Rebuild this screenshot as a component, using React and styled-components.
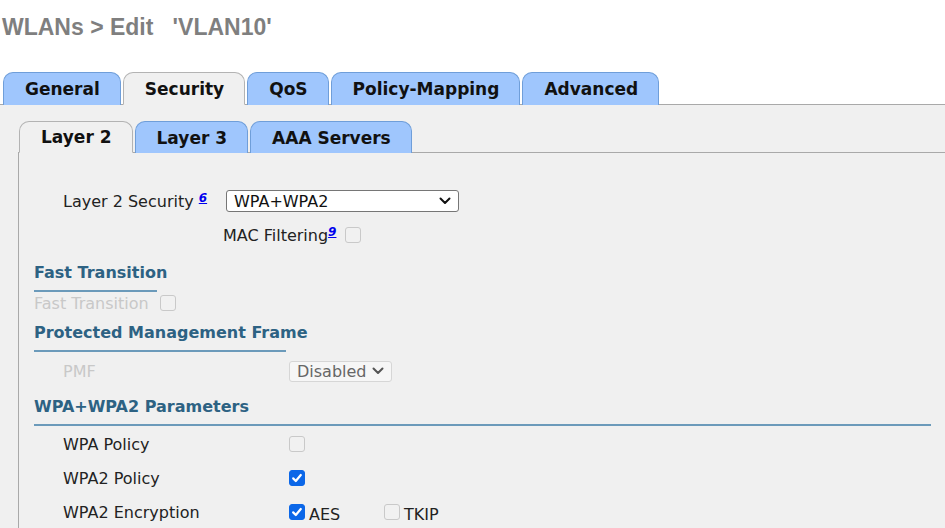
import React from "react";
import styled, { createGlobalStyle } from "styled-components";

const GlobalStyle = createGlobalStyle`
  html, body {
    margin: 0;
    padding: 0;
    background: #ffffff;
  }
  body {
    width: 945px;
    height: 528px;
    overflow: hidden;
    font-family: "DejaVu Sans", Verdana, sans-serif;
    color: #222222;
  }
`;

function Chevron({ color = "#111" }) {
  return (
    <svg width="12" height="8" viewBox="0 0 12 8">
      <path d="M1.5 1.5 L6 6 L10.5 1.5" fill="none" stroke={color} strokeWidth="2" strokeLinecap="round" strokeLinejoin="round" />
    </svg>
  );
}

function Check({ checked }) {
  return (
    <CheckBox checked={checked}>
      {checked && (
        <svg width="12" height="12" viewBox="0 0 12 12">
          <path d="M2.2 6.4 L4.8 9 L9.8 3" fill="none" stroke="#fff" strokeWidth="2.2" strokeLinecap="round" strokeLinejoin="round" />
        </svg>
      )}
    </CheckBox>
  );
}

const outerTabs = ["General", "Security", "QoS", "Policy-Mapping", "Advanced"];
const innerTabs = ["Layer 2", "Layer 3", "AAA Servers"];

export default function App() {
  return (
    <Page>
      <GlobalStyle />
      <Title>WLANs &gt; Edit&nbsp;&nbsp;&nbsp;'VLAN10'</Title>

      <TabBar indent={3}>
        {outerTabs.map((t) => (
          <Tab key={t} active={t === "Security"} h={33}>
            {t}
          </Tab>
        ))}
      </TabBar>

      <OuterPanel>
        <TabBar indent={1}>
          {innerTabs.map((t) => (
            <Tab key={t} active={t === "Layer 2"} h={32}>
              {t}
            </Tab>
          ))}
        </TabBar>

        <InnerPanel>
          <Row mt={37} indent={29}>
            <Label w={163}>
              Layer 2 Security <Sup href="#">6</Sup>
            </Label>
            <Select w={233} h={22}>
              <span>WPA+WPA2</span>
              <Chevron />
            </Select>
          </Row>

          <Row mt={13} h={20} indent={189}>
            <Label>
              MAC Filtering<Sup href="#">9</Sup>
            </Label>
            <Gap w={9} />
            <Check />
          </Row>

          <Heading mt={19} w={123}>Fast Transition</Heading>
          <Row mt={1} h={20}>
            <Label disabled>Fast Transition</Label>
            <Gap w={11} />
            <Check />
          </Row>

          <Heading mt={11} w={252}>Protected Management Frame</Heading>
          <Row mt={8} indent={29}>
            <Label w={226} disabled>PMF</Label>
            <Select w={103} h={21} disabled>
              <span>Disabled</span>
              <Chevron color="#555" />
            </Select>
          </Row>

          <Heading mt={16}>WPA+WPA2 Parameters</Heading>
          <Row mt={7} indent={29}>
            <Label w={226}>WPA Policy</Label>
            <Check />
          </Row>
          <Row mt={12} indent={29}>
            <Label w={226}>WPA2 Policy</Label>
            <Check checked />
          </Row>
          <Row mt={12} indent={29}>
            <Label w={226}>WPA2 Encryption</Label>
            <Option w={95}>
              <Check checked />
              <OptionText>AES</OptionText>
            </Option>
            <Option>
              <Check />
              <OptionText>TKIP</OptionText>
            </Option>
          </Row>
        </InnerPanel>
      </OuterPanel>
    </Page>
  );
}

const Page = styled.div`
  display: flex;
  flex-direction: column;
  height: 528px;
`;

const Title = styled.h1`
  margin: 0;
  padding: 14px 0 0 2px;
  height: 27px;
  line-height: 27px;
  font-family: "Liberation Sans", Arial, sans-serif;
  font-size: 23px;
  font-weight: bold;
  color: #7f7f7f;
  margin-bottom: 31px;
  white-space: nowrap;
`;

const TabBar = styled.div`
  display: flex;
  align-items: flex-end;
  gap: 2px;
  padding-left: ${(p) => p.indent || 0}px;
`;

const Tab = styled.div`
  position: relative;
  z-index: ${(p) => (p.active ? 2 : 1)};
  box-sizing: border-box;
  height: ${(p) => p.h}px;
  margin-bottom: -1px;
  padding: 0 20px 0 21px;
  display: flex;
  align-items: center;
  justify-content: center;
  font-size: 17px;
  font-weight: bold;
  color: #111111;
  white-space: nowrap;
  border: 1px solid ${(p) => (p.active ? "#b3b3b3" : "#6f9ed9")};
  border-bottom: ${(p) => (p.active ? "1px solid #f0f0f0" : "none")};
  border-radius: 10px 10px 0 0;
  background: ${(p) => (p.active ? "#f0f0f0" : "#9fc6fd")};
`;

const OuterPanel = styled.div`
  flex: 1;
  background: #f0f0f0;
  border-top: 1px solid #a9a9a9;
  padding: 16px 0 0 18px;
  display: flex;
  flex-direction: column;
`;

const InnerPanel = styled.div`
  flex: 1;
  border-top: 1px solid #a9a9a9;
  border-left: 1px solid #a9a9a9;
  padding: 0 14px 0 15px;
  display: flex;
  flex-direction: column;
`;

const Row = styled.div`
  display: flex;
  align-items: center;
  flex: none;
  height: ${(p) => p.h || 22}px;
  margin-top: ${(p) => p.mt || 0}px;
  padding-left: ${(p) => p.indent || 0}px;
`;

const Label = styled.span`
  flex: none;
  width: ${(p) => (p.w ? `${p.w}px` : "auto")};
  font-size: 16px;
  white-space: nowrap;
  color: ${(p) => (p.disabled ? "#c8c8c8" : "#222222")};
`;

const Sup = styled.a`
  font-size: 12px;
  font-weight: bold;
  font-style: italic;
  color: #0000ee;
  text-decoration: underline;
  vertical-align: 5px;
  line-height: 0;
`;

const Gap = styled.span`
  flex: none;
  width: ${(p) => p.w}px;
`;

const Select = styled.div`
  box-sizing: border-box;
  flex: none;
  width: ${(p) => p.w}px;
  height: ${(p) => p.h}px;
  display: flex;
  align-items: center;
  justify-content: space-between;
  padding: 0 7px 0 7px;
  font-size: 16px;
  background: ${(p) => (p.disabled ? "#f6f6f6" : "#ffffff")};
  color: ${(p) => (p.disabled ? "#666666" : "#111111")};
  border: 1px solid ${(p) => (p.disabled ? "#d6d6d6" : "#767676")};
  border-radius: 3px;
`;

const Heading = styled.div`
  flex: none;
  align-self: ${(p) => (p.w ? "flex-start" : "stretch")};
  width: ${(p) => (p.w ? `${p.w}px` : "auto")};
  margin-top: ${(p) => p.mt || 0}px;
  padding-bottom: 8px;
  border-bottom: 2px solid #6b9aba;
  line-height: 18px;
  font-size: 16px;
  font-weight: bold;
  color: #2d6283;
  white-space: nowrap;
`;

const CheckBox = styled.span`
  box-sizing: border-box;
  flex: none;
  width: 16px;
  height: 16px;
  display: inline-flex;
  align-items: center;
  justify-content: center;
  border-radius: 3px;
  border: 1px solid ${(p) => (p.checked ? "#0b67e8" : "#c9c9c9")};
  background: ${(p) => (p.checked ? "#0b67e8" : "#f1f1f1")};
`;

const Option = styled.span`
  flex: none;
  display: flex;
  align-items: center;
  width: ${(p) => (p.w ? `${p.w}px` : "auto")};
`;

const OptionText = styled.span`
  margin-left: 4px;
  margin-top: 4px;
  font-size: 16px;
`;
